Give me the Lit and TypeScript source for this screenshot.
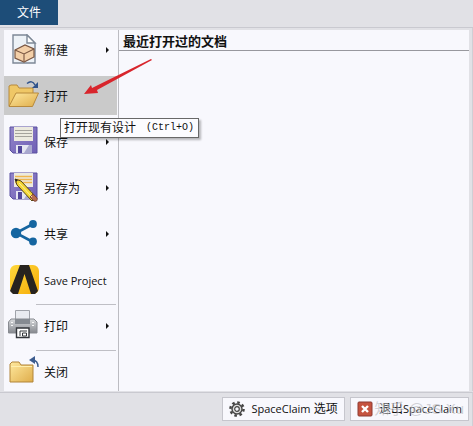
import { LitElement, html, css, svg } from "lit";
import { customElement } from "lit/decorators.js";
import { classMap } from "lit/directives/class-map.js";

const newIcon = svg`<path d="M5 1h14l8 8v20H5z" fill="#edf2f7" stroke="#7d8896" stroke-width="1.4"/>
  <path d="M19 1v8h8z" fill="#fff" stroke="#7d8896" stroke-width="1.4"/>
  <path d="M7 16l10-5 9 4v8l-10 5-9-4z" fill="#f3cfa8" stroke="#7a5642" stroke-width="1.2"/>
  <path d="M7 16l9 4 10-5M16 20v7" fill="none" stroke="#7a5642" stroke-width="1.1"/>`;

const openIcon = svg`<path d="M1 26V6l2-1h6l2 3h14v5" fill="#efc766" stroke="#b88a3c"/>
  <path d="M1 26.500L8 13h22.500l-6 13.500z" fill="url(#gold)" stroke="#b88a3c"/>
  <path d="M19 3.500q5-4 8 1.500" fill="none" stroke="#2f538c" stroke-width="1.5"/>
  <path d="M30 2v6h-6z" fill="#2f538c"/>`;

const floppy = svg`<path d="M2 1h27v26H5l-3-3z" fill="url(#violet)" stroke="#5b50a0"/>
  <path d="M6 1h19v14H6z" fill="#eceadf"/>
  <path d="M7 4.500h17M7 7.500h17M7 10.500h17" stroke="#a5a39c"/>
  <path d="M8 19h16v8H8z" fill="#e5e6f1"/><path d="M10 20h4v7h-4z" fill="#51469a"/>
  <path d="M21 19h3v8h-8z" fill="#a9a9cf"/>`;

const saveAsIcon = svg`${floppy}<path d="M7 4.500h17M7 7.500h17M7 10.500h17" stroke="#f0b64e" stroke-width="1.5"/>
  <path d="M7 7l6 2 15 16-4 4L9 13z" fill="#f3d735" stroke="#574715"/>
  <path d="M7 7l3 1-2 2z" fill="#222"/><path d="M25 22l4 4q1 4-3 3l-4-4z" fill="#b96d51" stroke="#7e4939"/>
  <path d="M11 11l13 14" stroke="#fff19a"/>`;

const shareIcon = svg`<path d="M25 6L8 15l17 9" fill="none" stroke="#1565a0" stroke-width="2.6"/>
  <circle cx="25" cy="6" r="3.900" fill="#1565a0"/><circle cx="8" cy="15" r="5.200" fill="#1565a0"/>
  <circle cx="25" cy="23.500" r="3.900" fill="#1565a0"/>`;

const ansysIcon = svg`<rect x="2" y="1" width="29" height="29" rx="6" fill="url(#amber)"/>
  <path d="M12 1h9l9 26-3 3h-4L16.500 10 10 30H5l-3-3z" fill="#27231f"/>`;

const printIcon = svg`<path d="M7.500 0.500h14v13h-14z" fill="#e9ebf0" stroke="#a0a3aa"/>
  <path d="M3 9h23l3 3v11H0.500V12z" fill="url(#steel)" stroke="#888b91"/>
  <path d="M7 9h15v5H7z" fill="#858a91"/>
  <path d="M3 12.500h2M3 15.500h2M24 12.500h2M24 15.500h2" stroke="#f7f7f7"/>
  <path d="M8.500 18h12.500v9.500H8.500z" fill="#fff" stroke="#33363b" stroke-width="1.4"/>
  <path d="M12 26v-5h7M14.500 26v-3h4v3z" fill="none" stroke="#33363b"/>`;

const closeIcon = svg`<path d="M2 26V8l2-2h7l2 3h12v17z" fill="url(#gold)" stroke="#b18439"/>
  <path d="M3 10.500h21" stroke="#ffefaf"/>
  <path d="M24 4q6 0 6 7" fill="none" stroke="#3c5c8e" stroke-width="1.5"/>
  <path d="M21 4l6-4v8z" fill="#3c5c8e"/>`;

const gradients = svg`<defs>
  <linearGradient id="gold" x1="0" y1="0" x2="1" y2="1"><stop offset="0" stop-color="#ffe99f"/><stop offset="1" stop-color="#dfad4b"/></linearGradient>
  <linearGradient id="violet" x1="0" y1="0" x2="1" y2="1"><stop offset="0" stop-color="#9386ca"/><stop offset="1" stop-color="#6f5fb5"/></linearGradient>
  <linearGradient id="amber" x1="0" y1="0" x2="1" y2="1"><stop offset="0" stop-color="#ffd83c"/><stop offset="1" stop-color="#f6ad09"/></linearGradient>
  <linearGradient id="steel" x1="0" y1="0" x2="0" y2="1"><stop offset="0" stop-color="#d7d9dc"/><stop offset="1" stop-color="#85888e"/></linearGradient>
</defs>`;

interface Entry {
  label: string;
  icon: unknown;
  submenu?: boolean;
  active?: boolean;
  divided?: boolean;
  latin?: boolean;
}

const entries: Entry[] = [
  { label: "新建", icon: newIcon, submenu: true },
  { label: "打开", icon: openIcon, active: true },
  { label: "保存", icon: floppy, submenu: true },
  { label: "另存为", icon: saveAsIcon, submenu: true },
  { label: "共享", icon: shareIcon, submenu: true },
  { label: "Save Project", icon: ansysIcon, latin: true },
  { label: "打印", icon: printIcon, submenu: true, divided: true },
  { label: "关闭", icon: closeIcon, divided: true },
];

@customElement("app-root")
export class AppRoot extends LitElement {
  static styles = css`
    :host {
      display: flex;
      flex-direction: column;
      min-height: 100vh;
      box-sizing: border-box;
      background: #e1e1e6;
      color: #111;
      font: 12px/16px "Liberation Sans", "Noto Sans CJK SC", sans-serif;
    }
    button {
      font: inherit;
      color: inherit;
      margin: 0;
      padding: 0;
      border: 0;
      background: none;
    }
    header {
      display: flex;
      height: 27px;
      border-bottom: 1px solid #c9c9d0;
    }
    .tab {
      width: 58px;
      height: 25px;
      background: #1d4d78;
      color: #fff;
    }
    .frame {
      flex: 1;
      display: flex;
      padding: 2px 3px 0 4px;
      border-right: 1px solid #cfcfd5;
    }
    nav {
      width: 114px;
      flex: none;
      background: #f8f8fd;
      border-right: 1px solid #bcbcc2;
    }
    ul {
      list-style: none;
      margin: 0;
      padding: 0;
      display: grid;
      gap: 7px;
    }
    li {
      position: relative;
    }
    .divided::before {
      content: "";
      position: absolute;
      top: -2px;
      left: 32px;
      right: 2px;
      border-top: 1px solid #bfbfc5;
    }
    .item {
      display: flex;
      align-items: center;
      width: 113px;
      height: 39px;
      padding: 0 8px 0 4px;
      gap: 4px;
      text-align: left;
    }
    .active {
      background: #cacaca;
    }
    .item svg {
      width: 32px;
      height: 32px;
      flex: none;
    }
    .label {
      flex: 1;
      padding-top: 2px;
      white-space: nowrap;
    }
    .latin {
      font-family: "Open Sans", sans-serif;
      font-size: 11px;
    }
    .caret {
      border-left: 3px solid #111;
      border-top: 3px solid transparent;
      border-bottom: 3px solid transparent;
    }
    .tooltip {
      position: absolute;
      z-index: 2;
      left: 56px;
      top: 42px;
      display: flex;
      align-items: center;
      gap: 10px;
      padding: 0 4px 0 3px;
      border: 1px solid #686868;
      background: #fcfcff;
      box-shadow: 2px 2px 2px #0004;
      line-height: 18px;
      white-space: nowrap;
    }
    kbd {
      font: 10px/16px "Liberation Mono", monospace;
    }
    .pointer {
      position: absolute;
      z-index: 1;
      left: 80px;
      top: -18px;
      width: 68px;
      height: 38px;
      pointer-events: none;
    }
    .recent {
      flex: 1;
      background: #f8f8fd;
    }
    h1 {
      margin: 0;
      padding: 3px 4px 0;
      border-bottom: 1px solid #98989e;
      font-size: 13px;
      line-height: 17px;
      font-weight: bold;
    }
    footer {
      position: relative;
      display: flex;
      justify-content: flex-end;
      gap: 5px;
      padding: 4px 3px 5px;
      border-top: 1px solid #c9c9d0;
      border-right: 1px solid #cfcfd5;
      margin-top: 1px;
    }
    .command {
      display: flex;
      align-items: center;
      gap: 6px;
      height: 24px;
      padding: 0 6px;
      border: 1px solid #c6c6cd;
      background: #f8f8fd;
      white-space: nowrap;
    }
    .command svg {
      width: 16px;
      height: 16px;
    }
    .watermark {
      position: absolute;
      right: 8px;
      top: 6px;
      font-size: 15px;
      line-height: 20px;
      color: #a8a8b080;
      text-shadow: 1px 1px 1px #fff8;
      pointer-events: none;
    }
  `;

  private renderEntry(entry: Entry) {
    return html`<li class=${classMap({ divided: !!entry.divided })}>
      <button class=${classMap({ item: true, active: !!entry.active })}>
        <svg viewBox="0 0 32 32" aria-hidden="true">${gradients}${entry.icon}</svg>
        <span class=${classMap({ label: true, latin: !!entry.latin })}>${entry.label}</span>
        ${entry.submenu ? html`<span class="caret"></span>` : ""}
      </button>
      ${entry.active
        ? html`<svg class="pointer" viewBox="0 0 68 38" aria-hidden="true">
              <path d="M67 1L68 2 13 32l1 3L0 36l7-9 1 3z" fill="#d8252c"/>
            </svg>
            <div class="tooltip" role="tooltip"><span>打开现有设计</span><kbd>(Ctrl+O)</kbd></div>`
        : ""}
    </li>`;
  }

  render() {
    return html`
      <header><button class="tab">文件</button></header>
      <div class="frame">
        <nav><ul>${entries.map((entry) => this.renderEntry(entry))}</ul></nav>
        <main class="recent"><h1>最近打开过的文档</h1></main>
      </div>
      <footer>
        <button class="command">
          <svg viewBox="0 0 16 16" aria-hidden="true">
            <circle cx="8" cy="8" r="6.6" fill="none" stroke="#444" stroke-width="2.4" stroke-dasharray="2.6 2.584"/>
            <circle cx="8" cy="8" r="5" fill="#ddd" stroke="#444" stroke-width="1.4"/>
            <circle cx="8" cy="8" r="2.3" fill="#f8f8fd" stroke="#444" stroke-width="1.2"/>
          </svg>
          <span><span class="latin">SpaceClaim</span> 选项</span>
        </button>
        <button class="command">
          <svg viewBox="0 0 16 16" aria-hidden="true">
            <rect x="1" y="1" width="14" height="14" rx="1" fill="#c5533f" stroke="#8d3b32"/>
            <path d="M5 5l6 6M11 5l-6 6" stroke="#fff" stroke-width="2.4"/>
          </svg>
          <span>退出<span class="latin">SpaceClaim</span></span>
        </button>
        <span class="watermark">知乎 @JS Xu</span>
      </footer>
    `;
  }
}
